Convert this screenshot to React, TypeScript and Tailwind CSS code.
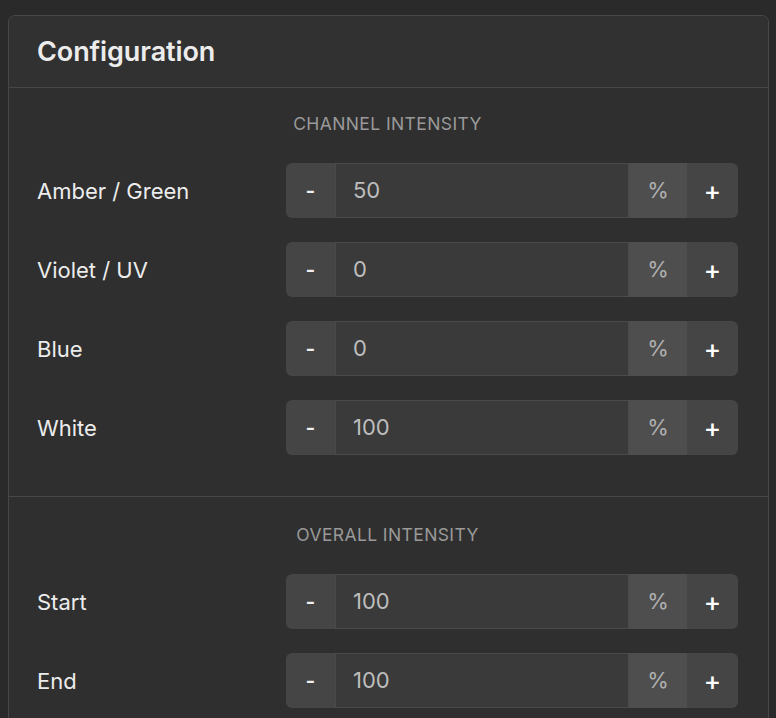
import React from "react";

const font = { fontFamily: "Inter, 'Noto Sans', 'Liberation Sans', sans-serif" };

function Row({ label, value }: { label: string; value: string }) {
  return (
    <div className="flex items-center h-[55px]">
      <div className="w-[249px] text-[22px] text-[#ececec] pt-[1px]">{label}</div>
      <div className="flex flex-1 h-full rounded-[6px] overflow-hidden">
        <button className="w-[49px] bg-[#454545] text-[#f0f0f0] text-[21px] font-semibold flex items-center justify-center">-</button>
        <div className="flex-1 bg-[#3a3a3a] border border-[#4a4a4a] flex items-center pl-[17px] text-[22px] text-[#bdbdbd]">{value}</div>
        <div className="w-[58px] bg-[#4e4e4e] flex items-center justify-center text-[22px] text-[#b0b0b0]">%</div>
        <button className="w-[51px] bg-[#454545] text-white text-[26px] font-medium flex items-center justify-center">+</button>
      </div>
    </div>
  );
}

export default function App() {
  return (
    <div className="min-h-[718px] bg-[#2a2a2a] pt-[15px] pl-[8px] pr-[7px]" style={font}>
      <div className="border border-[#474747] rounded-[7px] bg-[#2f2f2f]">
        <div className="h-[72px] flex items-center px-[28px] border-b border-[#474747] bg-[#313131] rounded-t-[7px]">
          <h1 className="text-[27px] font-semibold text-[#ececec] tracking-[-0.1px] pt-[1px]">Configuration</h1>
        </div>
        <div className="pt-[24px] pb-[41px] pl-[28px] pr-[30px] border-b border-[#474747]">
          <div className="h-[24px] flex items-center justify-center text-[17.5px] text-[#9a9a9a] tracking-[0.4px] mb-[27px]">CHANNEL INTENSITY</div>
          <div className="flex flex-col gap-[24px]">
            <Row label="Amber / Green" value="50" />
            <Row label="Violet / UV" value="0" />
            <Row label="Blue" value="0" />
            <Row label="White" value="100" />
          </div>
        </div>
        <div className="pt-[26px] pb-[40px] pl-[28px] pr-[30px]">
          <div className="h-[24px] flex items-center justify-center text-[17.5px] text-[#9a9a9a] tracking-[0.4px] mb-[27px]">OVERALL INTENSITY</div>
          <div className="flex flex-col gap-[24px]">
            <Row label="Start" value="100" />
            <Row label="End" value="100" />
          </div>
        </div>
      </div>
    </div>
  );
}
